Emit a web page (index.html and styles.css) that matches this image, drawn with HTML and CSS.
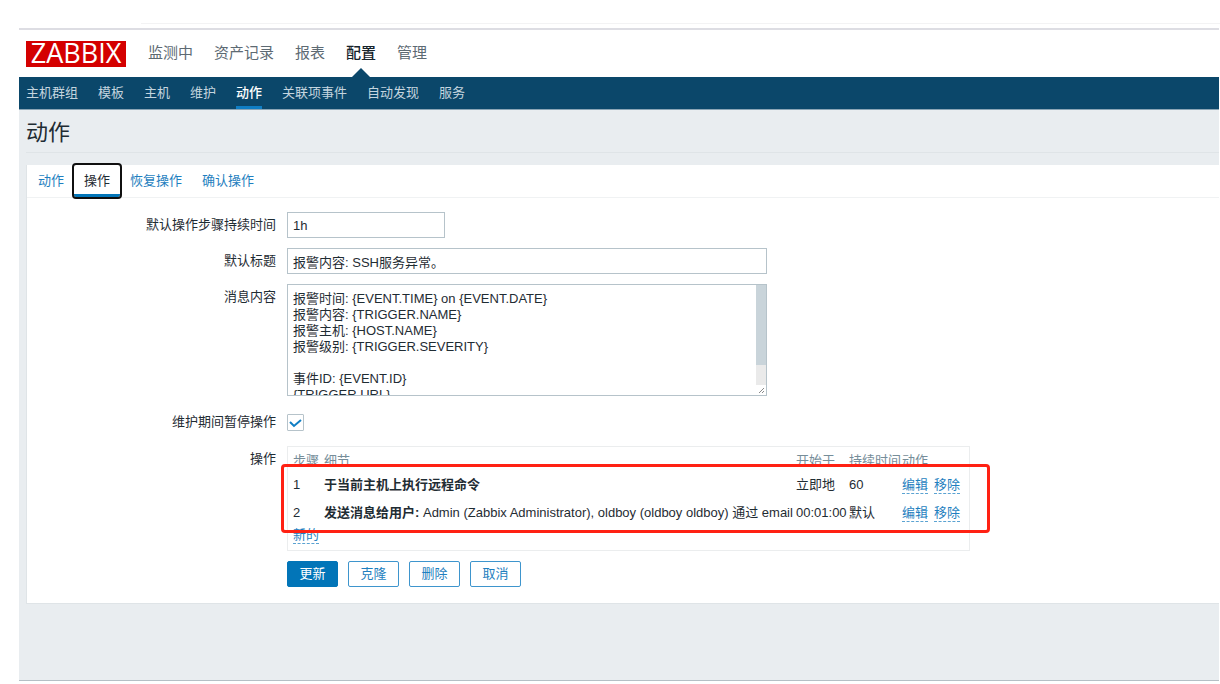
FILE: index.html
```html
<!DOCTYPE html>
<html lang="zh-CN">
<head>
<meta charset="utf-8">
<title>动作</title>
<link rel="stylesheet" href="styles.css">
</head>
<body>
<div class="browser-edge"></div>
<div class="app">
  <header class="top">
    <a class="logo" href="#">ZABBIX</a>
    <nav class="main-nav">
      <a href="#">监测中</a>
      <a href="#">资产记录</a>
      <a href="#">报表</a>
      <a href="#" class="selected">配置</a>
      <a href="#">管理</a>
    </nav>
  </header>
  <nav class="sub-nav">
    <a href="#">主机群组</a>
    <a href="#">模板</a>
    <a href="#">主机</a>
    <a href="#">维护</a>
    <a href="#" class="selected">动作</a>
    <a href="#">关联项事件</a>
    <a href="#">自动发现</a>
    <a href="#">服务</a>
  </nav>
  <main class="content">
    <h1>动作</h1>
    <form class="card">
      <div class="tabs">
        <a href="#">动作</a>
        <a href="#" class="active">操作</a>
        <a href="#">恢复操作</a>
        <a href="#">确认操作</a>
      </div>
      <div class="form">
        <label for="step">默认操作步骤持续时间</label>
        <input id="step" class="text short" type="text" value="1h">

        <label for="subject">默认标题</label>
        <input id="subject" class="text" type="text" value="报警内容: SSH服务异常。">

        <label for="message">消息内容</label>
        <div class="message-box">
          <textarea id="message" class="text message">报警时间: {EVENT.TIME} on {EVENT.DATE}
报警内容: {TRIGGER.NAME}
报警主机: {HOST.NAME}
报警级别: {TRIGGER.SEVERITY}

事件ID: {EVENT.ID}
{TRIGGER.URL}
</textarea>
          <div class="scroll-track">
            <div class="scroll-thumb"></div>
            <svg class="grip" viewBox="0 0 10 10" aria-hidden="true"><path d="M3 8l5-5M6 8l2-2"/></svg>
          </div>
        </div>

        <label for="pause" class="pause-label">维护期间暂停操作</label>
        <span class="check">
          <input id="pause" type="checkbox" checked>
          <svg viewBox="0 0 17 17" aria-hidden="true"><path d="M3 8l4 4 7-6"/></svg>
        </span>

        <span class="label">操作</span>
        <div class="operations">
          <table>
            <thead>
              <tr><th class="col-step">步骤</th><th class="col-detail">细节</th><th class="col-start">开始于</th><th class="col-duration">持续时间</th><th>动作</th></tr>
            </thead>
            <tbody>
              <tr><td>1</td><td><b>于当前主机上执行远程命令</b></td><td>立即地</td><td>60</td><td><button type="button" class="link">编辑</button><button type="button" class="link">移除</button></td></tr>
              <tr><td>2</td><td><b>发送消息给用户:</b> Admin (Zabbix Administrator), oldboy (oldboy oldboy) 通过 email</td><td>00:01:00</td><td>默认</td><td><button type="button" class="link">编辑</button><button type="button" class="link">移除</button></td></tr>
            </tbody>
          </table>
          <div class="new"><button type="button" class="link">新的</button></div>
          <div class="highlight"></div>
        </div>

        <div class="buttons">
          <button type="button" class="primary">更新</button>
          <button type="button">克隆</button>
          <button type="button">删除</button>
          <button type="button">取消</button>
        </div>
      </div>
    </form>
  </main>
</div>
</body>
</html>
```
FILE: styles.css
```css
* {
  box-sizing: border-box;
}

body {
  margin: 0;
  background: #fff;
  color: #1f2c33;
  font: 13px/16px "Liberation Sans", "Noto Sans CJK SC", sans-serif;
}

a {
  color: #1f7fc0;
  text-decoration: none;
}

button,
input,
textarea {
  font: inherit;
}

.browser-edge {
  height: 24px;
  margin-left: 141px;
  border-bottom: 1px solid #f3f3f4;
}

.app {
  display: flex;
  flex-direction: column;
  min-height: calc(100vh - 31px);
  margin: 4px 1px 3px 19px;
  border-top: 2px solid #dddde3;
  border-bottom: 1px solid #b5bfc5;
  background: #e9edf0;
}

.top {
  display: flex;
  align-items: center;
  gap: 22px;
  height: 47px;
  padding-left: 7px;
  background: #fff;
}

.logo {
  width: 100px;
  height: 26px;
  background: #d40000;
  color: #fff;
  font: 27px/24px "Open Sans", sans-serif;
  text-align: center;
}

.main-nav {
  display: flex;
  align-self: stretch;
  gap: 21px;
  font-size: 15px;
  line-height: 46px;
}

.main-nav a {
  color: #5d6a73;
}

.main-nav .selected {
  position: relative;
  color: #16232b;
  font-weight: 500;
}

.main-nav .selected::after {
  content: "";
  position: absolute;
  bottom: 0;
  left: 50%;
  margin-left: -9px;
  border: 9px solid transparent;
  border-top: 0;
  border-bottom-color: #0b476a;
}

.sub-nav {
  display: flex;
  gap: 20px;
  height: 33px;
  padding-left: 7px;
  border-bottom: 1px solid #8ba5b5;
  background: #0b476a;
  line-height: 32px;
}

.sub-nav a {
  color: #c4d5df;
}

.sub-nav .selected {
  border-bottom: 3px solid #0f7ec4;
  color: #fff;
  font-weight: 500;
}

.content {
  padding-left: 7px;
}

h1 {
  margin: 0 0 12px;
  padding: 11px 0 7px;
  border-bottom: 1px solid #dfe4e7;
  font-size: 22px;
  font-weight: 400;
  line-height: 24px;
}

.card {
  border: 1px solid #dfe4e7;
  border-width: 0 0 1px 1px;
  background: #fff;
}

.tabs {
  display: flex;
  height: 33px;
  padding-left: 1px;
  border-bottom: 1px solid #f0f2f3;
  line-height: 32px;
}

.tabs a {
  padding: 0 10px;
}

.tabs .active {
  border-bottom: 3px solid #0275b8;
  border-radius: 2px;
  outline: 2px solid #101010;
  color: #1f2c33;
}

.form {
  display: grid;
  grid-template-columns: 249px minmax(0, 1fr);
  gap: 10px 11px;
  align-items: start;
  padding: 14px 0 16px;
}

.form > label,
.form > .label {
  padding-top: 5px;
  text-align: right;
}

.text {
  width: 100%;
  max-width: 480px;
  height: 26px;
  margin: 0;
  padding: 0 5px;
  border: 1px solid #b6c3ca;
  border-radius: 0;
  background: #fff;
  color: #1f2c33;
}

.text.short {
  max-width: 158px;
}

.message-box {
  position: relative;
  max-width: 480px;
}

.text.message {
  display: block;
  height: 112px;
  padding: 6px 15px 6px 5px;
  overflow-y: scroll;
  resize: none;
  scrollbar-width: none;
}

.scroll-track {
  position: absolute;
  inset: 1px 1px 1px auto;
  width: 10px;
  background: #eaeaea;
  pointer-events: none;
}

.scroll-thumb {
  height: 80px;
  background: #c9d4da;
}

.grip {
  position: absolute;
  bottom: 0;
  left: 0;
  width: 10px;
  background: #fff;
  fill: none;
  stroke: #8a8a8a;
}

.form > .pause-label {
  padding-top: 8px;
}

.check {
  position: relative;
  width: 17px;
  height: 30px;
  padding-top: 8px;
}

.check input {
  display: block;
  width: 17px;
  height: 17px;
  margin: 0;
  border: 1px solid #b6c3ca;
  border-radius: 1px;
  appearance: none;
  background: #fff;
}

.check svg {
  position: absolute;
  top: 8px;
  left: 0;
  width: 17px;
  fill: none;
  stroke: #0f7ec4;
  stroke-width: 2;
  pointer-events: none;
}

.operations {
  position: relative;
  width: 683px;
  padding: 6px 5px;
  border: 1px solid #ebedee;
}

table {
  width: 100%;
  border-collapse: collapse;
  table-layout: fixed;
}

th,
td {
  height: 28px;
  padding: 0;
  text-align: left;
  font-weight: 400;
  white-space: nowrap;
}

th {
  height: 18px;
  color: #768d99;
  vertical-align: top;
}

.col-step {
  width: 31px;
}

.col-detail {
  width: 472px;
}

.col-start {
  width: 53px;
}

.col-duration {
  width: 53px;
}

.link {
  margin: 0 6px 0 0;
  padding: 0;
  border: 0;
  border-bottom: 1px dashed #5ba3d2;
  background: none;
  color: #1f7fc0;
  line-height: 16px;
}

.new {
  height: 17px;
}

.highlight {
  position: absolute;
  inset: 17px -21px 17px -7px;
  border: 3px solid #ff2113;
  border-radius: 4px;
  pointer-events: none;
}

.buttons {
  display: flex;
  grid-column: 2;
  gap: 10px;
}

.buttons button {
  width: 51px;
  height: 26px;
  padding: 0;
  border: 1px solid #3e95cd;
  border-radius: 2px;
  background: #fff;
  color: #1f7fc0;
}

.buttons .primary {
  border-color: #0275b8;
  background: #0275b8;
  color: #fff;
}
```
